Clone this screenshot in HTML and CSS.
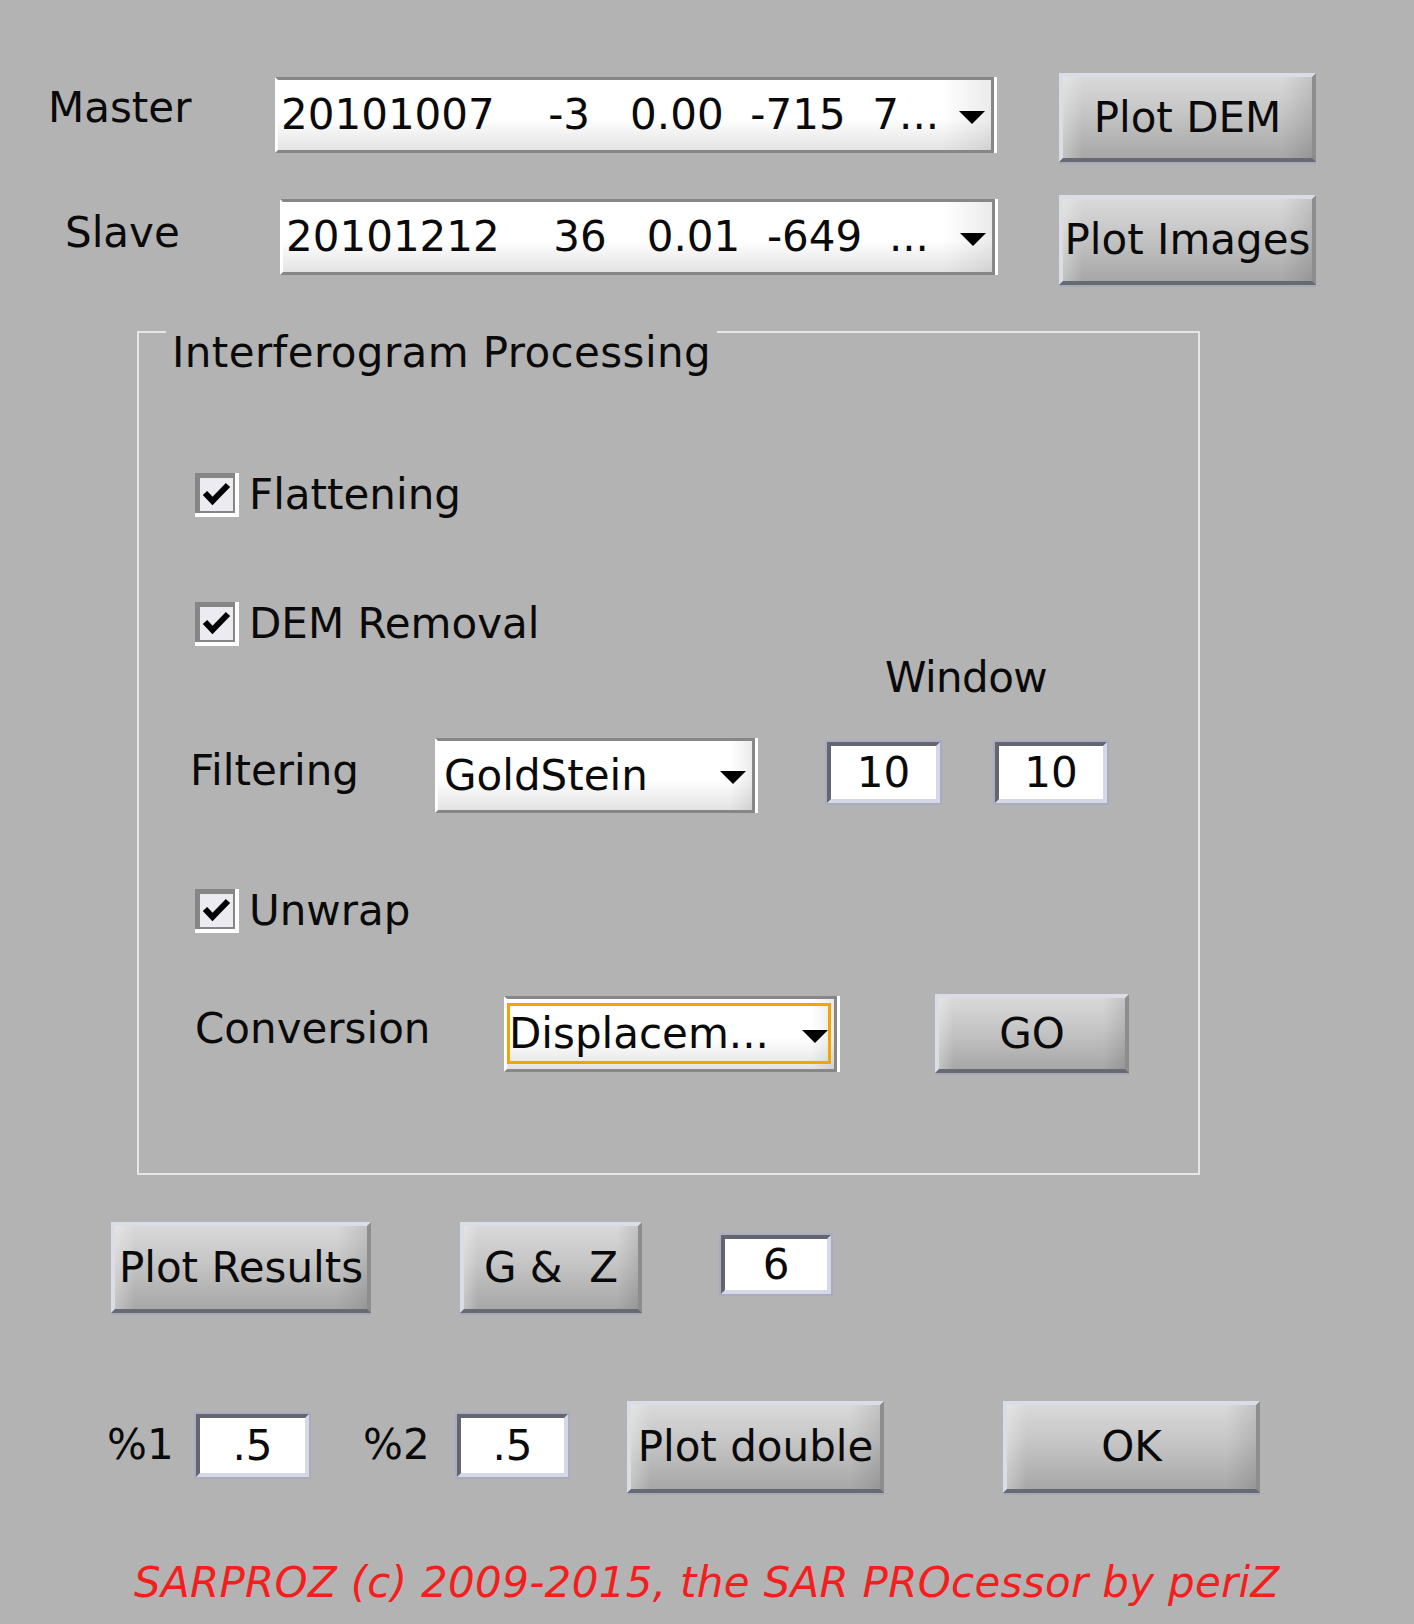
FILE: index.html
```html
<!DOCTYPE html>
<html lang="en">
<head>
  <meta charset="UTF-8">
  <meta name="viewport" content="width=device-width, initial-scale=1.0">
  <title>Interferogram Processing</title>
  <link rel="stylesheet" href="styles.css">
</head>
<body>
  <div class="dialog">
    <div class="row row-master">
      <span class="label label-master">Master</span>
      <div class="combo combo-master">
        <span class="combo-text">20101007    -3   0.00  -715  7...</span>
        <span class="arrow"></span>
      </div>
      <button class="btn btn-dem">Plot DEM</button>
    </div>

    <div class="row row-slave">
      <span class="label label-slave">Slave</span>
      <div class="combo combo-slave">
        <span class="combo-text">20101212    36   0.01  -649  ...</span>
        <span class="arrow"></span>
      </div>
      <button class="btn btn-images">Plot Images</button>
    </div>

    <div class="panel">
      <div class="panel-title">Interferogram Processing</div>

      <div class="check-row row-flat">
        <span class="check"><span class="check-box">
          <svg width="33" height="33" viewBox="0 0 33 33"><polyline points="5,15 12.5,23 28,7" fill="none" stroke="#000" stroke-width="6"/></svg>
        </span></span>
        <span class="check-label">Flattening</span>
      </div>

      <div class="check-row row-dem">
        <span class="check"><span class="check-box">
          <svg width="33" height="33" viewBox="0 0 33 33"><polyline points="5,15 12.5,23 28,7" fill="none" stroke="#000" stroke-width="6"/></svg>
        </span></span>
        <span class="check-label">DEM Removal</span>
      </div>

      <div class="window-label">Window</div>

      <div class="filter-row">
        <span class="label label-filter">Filtering</span>
        <div class="combo combo-filter">
          <span class="combo-text">GoldStein</span>
          <span class="arrow"></span>
        </div>
        <div class="edit edit-win1">10</div>
        <div class="edit edit-win2">10</div>
      </div>

      <div class="check-row row-unwrap">
        <span class="check"><span class="check-box">
          <svg width="33" height="33" viewBox="0 0 33 33"><polyline points="5,15 12.5,23 28,7" fill="none" stroke="#000" stroke-width="6"/></svg>
        </span></span>
        <span class="check-label">Unwrap</span>
      </div>

      <div class="conv-row">
        <span class="label label-conv">Conversion</span>
        <div class="combo combo-conv focused">
          <span class="combo-text">Displacem...</span>
          <span class="arrow"></span>
        </div>
        <button class="btn btn-go">GO</button>
      </div>
    </div>

    <div class="row row-results">
      <button class="btn btn-results">Plot Results</button>
      <button class="btn btn-gz">G &amp;  Z</button>
      <div class="edit edit-six">6</div>
    </div>

    <div class="row row-double">
      <span class="label label-p1">%1</span>
      <div class="edit edit-p1">.5</div>
      <span class="label label-p2">%2</span>
      <div class="edit edit-p2">.5</div>
      <button class="btn btn-double">Plot double</button>
      <button class="btn btn-ok">OK</button>
    </div>

    <div class="footer">SARPROZ (c) 2009-2015, the SAR PROcessor by periZ</div>
  </div>
</body>
</html>
```

FILE: styles.css
```css
* {
  margin: 0;
  padding: 0;
  box-sizing: border-box;
}

html, body {
  width: 1414px;
  height: 1624px;
  overflow: hidden;
}

body {
  font-family: "DejaVu Sans", "Liberation Sans", sans-serif;
  font-size: 42px;
  line-height: 48px;
  background-color: #b3b3b3;
  color: #0a0a0a;
}

.dialog {
  padding-top: 73px;
}

.row {
  display: flex;
  align-items: flex-start;
}

.label {
  flex: none;
  white-space: pre;
}

/* top rows */
.label-master {
  margin: 10.5px 0 0 48px;
  width: 227px;
}

.label-slave {
  margin: 13.5px 0 0 65px;
  width: 215px;
}

.row-slave {
  margin-top: 33px;
}

/* combo boxes */
.combo {
  position: relative;
  flex: none;
  display: flex;
  align-items: center;
  height: 76px;
  padding-left: 3px;
  border-top: 3px solid #878787;
  border-bottom: 3px solid #878787;
  border-left: 3px solid #fff;
  border-right: 3px solid #878787;
  box-shadow: 3px 0 0 #fff;
  background:
    linear-gradient(to right, rgba(0, 0, 0, 0) 93%, rgba(0, 0, 0, 0.08)),
    linear-gradient(#fff 0%, #fff 55%, #e3e3e3 100%);
}

.combo-text {
  white-space: pre;
}

.arrow {
  margin: 4px 6px 0 auto;
  width: 0;
  height: 0;
  border-left: 13px solid transparent;
  border-right: 13px solid transparent;
  border-top: 13px solid #000;
}

.combo-master {
  margin-top: 4px;
  width: 719px;
}

.combo-slave {
  margin-top: 4px;
  width: 715px;
}

.combo-filter {
  width: 320px;
  height: 75px;
  padding-left: 6px;
}

.combo-conv {
  margin-top: 2px;
  width: 333px;
  padding-left: 2px;
}

.combo.focused::after {
  content: '';
  position: absolute;
  top: 4px;
  left: 0;
  right: 3px;
  bottom: 5px;
  border: 3px solid #f4a300;
}

/* push buttons */
.btn {
  flex: none;
  font-family: inherit;
  font-size: 42px;
  line-height: 48px;
  color: #0a0a0a;
  white-space: pre;
  overflow: hidden;
  display: flex;
  align-items: center;
  justify-content: center;
  border-top: 4px solid #dadce6;
  border-left: 4px solid #dadce6;
  border-right: 4px solid #8d8d90;
  border-bottom: 4px solid #666a73;
  box-shadow: 0 2px 0 #a7a9b7;
  background:
    linear-gradient(to right, rgba(255, 255, 255, 0.3), rgba(255, 255, 255, 0) 8%, rgba(0, 0, 0, 0) 88%, rgba(0, 0, 0, 0.1)),
    linear-gradient(#d9d9d9, #c5c5c5 45%, #a7a7a7);
}

.btn-dem {
  margin-left: 65px;
  width: 257px;
  height: 89px;
}

.btn-images {
  margin-left: 64px;
  width: 257px;
  height: 90px;
}

/* edit fields */
.edit {
  flex: none;
  display: flex;
  align-items: center;
  justify-content: center;
  background: #fff;
  border-top: 4px solid #63656f;
  border-left: 4px solid #63656f;
  border-bottom: 4px solid #d6d8e6;
  border-right: 4px solid #d6d8e6;
  outline: 2px solid #a9abc1;
}

/* panel */
.panel {
  margin: 46px 0 0 137px;
  width: 1063px;
  height: 844px;
  border: 2px solid #e6e6e6;
}

.panel-title {
  width: fit-content;
  margin: -4px 0 0 27px;
  padding: 0 6px;
  letter-spacing: 0.4px;
  background-color: #b3b3b3;
}

.check-row {
  display: flex;
  align-items: center;
  height: 44px;
  margin-left: 56px;
}

.check {
  flex: none;
  width: 44px;
  height: 44px;
  border-right: 4px solid #fff;
  border-bottom: 4px solid #fff;
}

.check-box {
  display: block;
  height: 100%;
  border: solid #868686;
  border-width: 5px 2px 2px 5px;
  background: #ecebf2;
}

.check-box svg {
  display: block;
}

.check-label {
  margin-left: 10px;
}

.row-flat {
  margin-top: 96px;
}

.row-dem {
  margin-top: 85px;
}

.window-label {
  margin: 7.5px 0 0 746px;
  letter-spacing: -0.6px;
}

.filter-row {
  display: flex;
  align-items: flex-start;
  margin-top: 36.5px;
}

.label-filter {
  margin: 8.5px 0 0 51px;
  width: 245px;
}

.edit-win1 {
  margin: 4px 0 0 72px;
  width: 113px;
  height: 61px;
}

.edit-win2 {
  margin: 4px 0 0 55px;
  width: 112px;
  height: 61px;
}

.row-unwrap {
  margin-top: 76px;
}

.conv-row {
  display: flex;
  align-items: flex-start;
  margin-top: 61px;
}

.label-conv {
  margin: 10.5px 0 0 56px;
  width: 309px;
}

.btn-go {
  margin-left: 98px;
  width: 194px;
  height: 79px;
}

/* bottom rows */
.row-results {
  margin-top: 47px;
  padding-left: 111px;
}

.btn-results {
  width: 260px;
  height: 91px;
}

.btn-gz {
  margin-left: 89px;
  width: 182px;
  height: 91px;
}

.edit-six {
  margin: 13px 0 0 79px;
  width: 110px;
  height: 59px;
}

.row-double {
  margin-top: 88px;
}

.label-p1 {
  margin: 19.5px 0 0 107px;
  width: 89px;
}

.edit-p1 {
  margin-top: 13px;
  width: 113px;
  height: 63px;
}

.label-p2 {
  margin: 19.5px 0 0 54px;
  width: 94px;
}

.edit-p2 {
  margin-top: 13px;
  width: 111px;
  height: 63px;
}

.btn-double {
  margin-left: 59px;
  width: 257px;
  height: 92px;
}

.btn-ok {
  margin-left: 119px;
  width: 257px;
  height: 92px;
}

.footer {
  margin: 65.5px 0 0 134px;
  font-style: italic;
  letter-spacing: 0.3px;
  color: #f41e1e;
  white-space: pre;
}
```
